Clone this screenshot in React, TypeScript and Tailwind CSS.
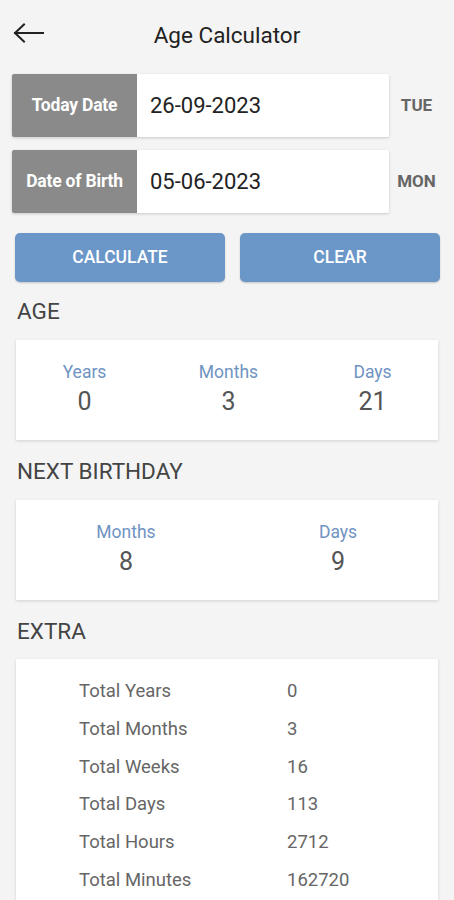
const extra = [
  { label: "Total Years", value: "0" },
  { label: "Total Months", value: "3" },
  { label: "Total Weeks", value: "16" },
  { label: "Total Days", value: "113" },
  { label: "Total Hours", value: "2712" },
  { label: "Total Minutes", value: "162720" },
];

function DateRow({ label, date, day }: { label: string; date: string; day: string }) {
  return (
    <div className="flex items-center">
      <div className="flex h-[63px] w-[377px] shadow-[0_1px_3px_rgba(0,0,0,0.18)] rounded-[2px] overflow-hidden">
        <div className="w-[125px] bg-[#8a8a8a] flex items-center justify-center text-white text-[17.5px] font-bold tracking-[-0.2px]">
          {label}
        </div>
        <div className="flex-1 bg-white flex items-center pl-[13px] text-[22px] text-[#222]">{date}</div>
      </div>
      <div className="flex-1 text-center text-[17px] font-bold text-[#666] pl-[2px]">{day}</div>
    </div>
  );
}

function Stat({ label, value, w }: { label: string; value: string; w: string }) {
  return (
    <div className={`flex flex-col items-center gap-[4px] shrink-0 ${w}`}>
      <div className="text-[17.5px] text-[#6f93c2] leading-[22px]">{label}</div>
      <div className="text-[25px] text-[#555] leading-[30px]">{value}</div>
    </div>
  );
}

export default function App() {
  return (
    <div
      className="bg-[#f4f4f4] overflow-hidden h-[900px]"
      style={{ fontFamily: "Roboto, 'Liberation Sans', sans-serif" }}
    >
      {/* Header */}
      <div className="relative flex items-center justify-center h-[70px] pt-[1px]">
        <svg
          className="absolute left-[12px] top-[22px]"
          width="34"
          height="22"
          viewBox="0 0 34 22"
          fill="none"
          stroke="#222"
          strokeWidth="2"
          strokeLinecap="square"
        >
          <path d="M3 11H31" />
          <path d="M12 2.5L3 11l9 8.5" strokeLinejoin="miter" />
        </svg>
        <div className="text-[22.5px] text-[#222]">Age Calculator</div>
      </div>

      <div className="px-[12px] flex flex-col gap-[13px] pt-[4px]">
        <DateRow label="Today Date" date="26-09-2023" day="TUE" />
        <DateRow label="Date of Birth" date="05-06-2023" day="MON" />
      </div>

      <div className="flex gap-[15px] pl-[15px] pr-[14px] mt-[20px]">
        <button className="w-[210px] h-[49px] rounded-[5px] bg-[#6a96c8] text-white text-[17.5px] font-medium shadow-[0_1px_2px_rgba(0,0,0,0.2)]">
          CALCULATE
        </button>
        <button className="flex-1 h-[49px] rounded-[5px] bg-[#6a96c8] text-white text-[17.5px] font-medium shadow-[0_1px_2px_rgba(0,0,0,0.2)]">
          CLEAR
        </button>
      </div>

      <div className="px-[16px]">
        <div className="text-[22.5px] text-[#444] pl-[1px] mt-[15px] h-[43px] leading-[28px]">AGE</div>
        <div className="bg-white shadow-[0_1px_3px_rgba(0,0,0,0.15)] h-[100px] flex justify-center items-center pb-[2px] pl-[3px]">
          <Stat label="Years" value="0" w="w-[144px]" />
          <Stat label="Months" value="3" w="w-[144px]" />
          <Stat label="Days" value="21" w="w-[144px]" />
        </div>

        <div className="text-[22.5px] text-[#444] pl-[1px] mt-[17px] h-[43px] leading-[28px]">NEXT BIRTHDAY</div>
        <div className="bg-white shadow-[0_1px_3px_rgba(0,0,0,0.15)] h-[100px] flex justify-center items-center pb-[2px] pl-[10px]">
          <Stat label="Months" value="8" w="w-[212px]" />
          <Stat label="Days" value="9" w="w-[212px]" />
        </div>

        <div className="text-[22.5px] text-[#444] pl-[1px] mt-[17px] h-[42px] leading-[28px]">EXTRA</div>
        <div className="bg-white shadow-[0_1px_3px_rgba(0,0,0,0.15)] pt-[14px] pb-[20px] pl-[63px]">
          {extra.map((r) => (
            <div key={r.label} className="flex h-[37.8px] items-center text-[18.5px] text-[#666]">
              <div className="w-[208px]">{r.label}</div>
              <div>{r.value}</div>
            </div>
          ))}
        </div>
      </div>
    </div>
  );
}
